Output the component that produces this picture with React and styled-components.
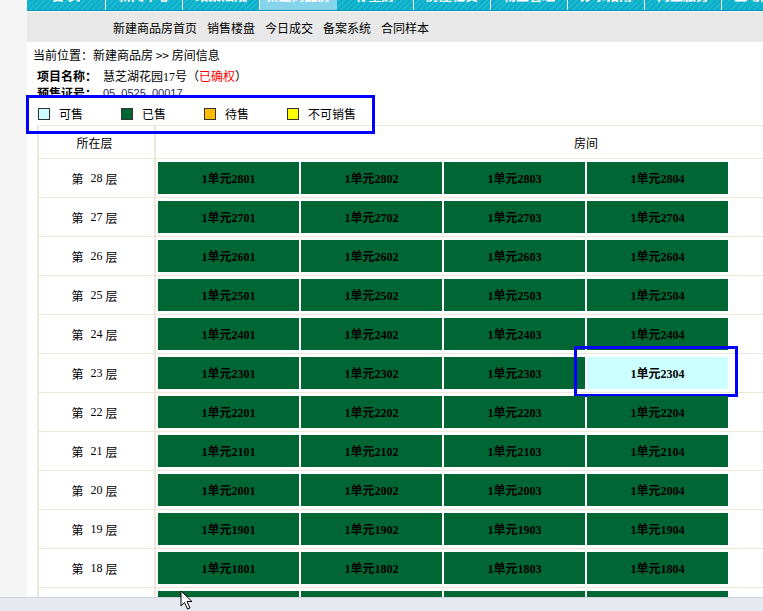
import React from 'react';
import styled, { createGlobalStyle } from 'styled-components';

const GlobalStyle = createGlobalStyle`
  html, body {
    margin: 0;
    padding: 0;
    background: #f5f5f5;
    overflow: hidden;
  }
  body {
    font-family: "Noto Sans CJK SC", "Noto Sans", sans-serif;
    font-size: 12px;
    color: #000;
  }`

const LINE = '#ece8d8';

const Page = styled.div`
    margin-left: 27px;
    width: 1100px;
    min-height: 100vh;
    background: #fff;`

const TopNav = styled.div`
    display: flex;
    height: 10px;
    overflow: hidden;
    background: repeating-linear-gradient(135deg, #1bb9d2 0 2px, #0cadc8 2px 4px);
    border-bottom: 1px solid #0a93b0;`

const Tab = styled.div`
    flex: none;
    width: ${p => p.$w}px;
    border-right: 1px solid ${p => p.$active ? 'transparent' : '#fff'};
    background: ${p => p.$active ? '#86d3ec' : 'transparent'};
    color: #fff;
    font-weight: bold;
    font-size: 13px;
    line-height: 13px;
    text-align: center;
    overflow: hidden;
    span {
        display: block;
        margin-top: -12px;
    }`

const SubNav = styled.div`
    display: flex;
    align-items: center;
    gap: 10px;
    height: 30px;
    padding-left: 86px;
    border-top: 1px solid #fff;
    background: #e8e8e8;
    font-size: 12px;`

const Crumb = styled.div`
    margin: 6px 0 0 6px;
    line-height: 14px;`

const InfoLine = styled.div`
    display: flex;
    margin: ${p => p.$top}px 0 0 10px;
    line-height: 14px;`

const Label = styled.span`
    width: 66px;
    font-weight: bold;`

const Num = styled.span`
    font-family: "Liberation Serif", serif;`

const Red = styled.span`
    color: #ff0000;`

const Cert = styled.span`
    color: #2d2d5a;
    font-family: "Liberation Sans", sans-serif;
    font-size: 11px;`

const Legend = styled.div`
    position: relative;
    z-index: 2;
    display: flex;
    align-items: center;
    height: 27px;
    margin-top: -2px;
    padding: 4px 0 0 11px;
    box-sizing: border-box;
    background: #fff;
    &::after {
        content: '';
        position: absolute;
        top: -3px;
        left: -1px;
        width: 349px;
        height: 39px;
        box-sizing: border-box;
        border: 3px solid #0000ff;
        pointer-events: none;
    }`

const LegendItem = styled.div`
    display: flex;
    align-items: center;
    gap: 9px;
    width: 83px;`

const Swatch = styled.span`
    width: 12px;
    height: 12px;
    box-sizing: border-box;
    border: 1px solid #333;
    background: ${p => p.$color};`

const Table = styled.div`
    margin-left: 10px;
    border-top: 1px solid ${LINE};
    border-left: 2px solid ${LINE};`

const Row = styled.div`
    display: grid;
    grid-template-columns: 117px 1fr;
    height: ${p => p.$h}px;
    border-bottom: 1px solid ${LINE};`

const FloorCell = styled.div`
    display: flex;
    align-items: center;
    justify-content: center;
    border-right: 2px solid ${LINE};
    box-sizing: border-box;
    padding-right: 4px;`

const FloorNum = styled.span`
    font-family: "Liberation Serif", serif;
    margin: 0 3px 0 7px;`

const HeadCell = styled.div`
    display: flex;
    align-items: center;
    justify-content: center;
    width: 860px;`

const Rooms = styled.div`
    display: flex;
    gap: 2px;
    padding: 3px 0 3px 2px;`

const Room = styled.div`
    position: relative;
    display: flex;
    align-items: center;
    justify-content: center;
    width: 141px;
    height: 32px;
    background: ${p => p.$available ? '#ccffff' : '#006633'};
    color: #000;
    font-family: "Liberation Serif", "Noto Sans CJK SC", serif;
    font-weight: bold;
    font-size: 12px;
    &::after {
        content: '';
        display: ${p => p.$marked ? 'block' : 'none'};
        position: absolute;
        top: -11px;
        left: -13px;
        width: 164px;
        height: 51px;
        box-sizing: border-box;
        border: 3px solid #0000ff;
        pointer-events: none;
    }`

const StatusBar = styled.div`
    position: fixed;
    left: 0;
    right: 0;
    bottom: 0;
    height: 13px;
    background: #e6eaf0;
    border-top: 1px solid #cdd2da;`

const Cursor = styled.svg`
    position: fixed;
    left: 180px;
    top: 590px;
    z-index: 5;`

const tabs = [
    { w: 78, t: '首 页' },
    { w: 76, t: '新闻中心' },
    { w: 76, t: '政策法规' },
    { w: 76, t: '新建商品房', active: true },
    { w: 76, t: '存量房' },
    { w: 76, t: '房屋租赁' },
    { w: 76, t: '物业管理' },
    { w: 76, t: '办事指南' },
    { w: 76, t: '网上服务' },
    { w: 76, t: '互动交流' },
];

const legend = [
    { c: '#ccffff', t: '可售' },
    { c: '#006633', t: '已售' },
    { c: '#ffbb00', t: '待售' },
    { c: '#ffff00', t: '不可销售' },
];

const floors = [];
for (let f = 28; f >= 16; f--) floors.push(f);

function App() {
    return (
        <>
            <GlobalStyle />
            <Page>
                <TopNav>
                    {tabs.map(tab => (
                        <Tab key={tab.t} $w={tab.w} $active={tab.active}><span>{tab.t}</span></Tab>
                    ))}
                </TopNav>
                <SubNav>
                    <span>新建商品房首页</span>
                    <span>销售楼盘</span>
                    <span>今日成交</span>
                    <span>备案系统</span>
                    <span>合同样本</span>
                </SubNav>

                <Crumb>当前位置：新建商品房 &gt;&gt; 房间信息</Crumb>
                <InfoLine $top={7}>
                    <Label>项目名称：</Label>
                    <span>慧芝湖花园<Num>17</Num>号（<Red>已确权</Red>）</span>
                </InfoLine>
                <InfoLine $top={2}>
                    <Label>预售证号：</Label>
                    <Cert>05_0525_00017</Cert>
                </InfoLine>

                <Legend>
                    {legend.map(l => (
                        <LegendItem key={l.t}>
                            <Swatch $color={l.c} />
                            <span>{l.t}</span>
                        </LegendItem>
                    ))}
                </Legend>

                <Table>
                    <Row $h={32}>
                        <FloorCell>所在层</FloorCell>
                        <HeadCell>房间</HeadCell>
                    </Row>
                    {floors.map(f => (
                        <Row key={f} $h={38}>
                            <FloorCell>第<FloorNum>{f}</FloorNum>层</FloorCell>
                            <Rooms>
                                {[1, 2, 3, 4].map(n => {
                                    const no = `${f}0${n}`;
                                    const free = no === '2304';
                                    return (
                                        <Room key={no} $available={free} $marked={free}>1单元{no}</Room>
                                    );
                                })}
                            </Rooms>
                        </Row>
                    ))}
                </Table>
            </Page>
            <StatusBar />
            <Cursor width="14" height="21" viewBox="0 0 14 21">
                <path d="M1 1 L1 16 L4.5 12.5 L7.5 19 L10 18 L7 11.5 L12 11.5 Z" fill="#fff" stroke="#000" strokeWidth="1" strokeLinejoin="round" />
            </Cursor>
        </>
    );
}

export default App;
